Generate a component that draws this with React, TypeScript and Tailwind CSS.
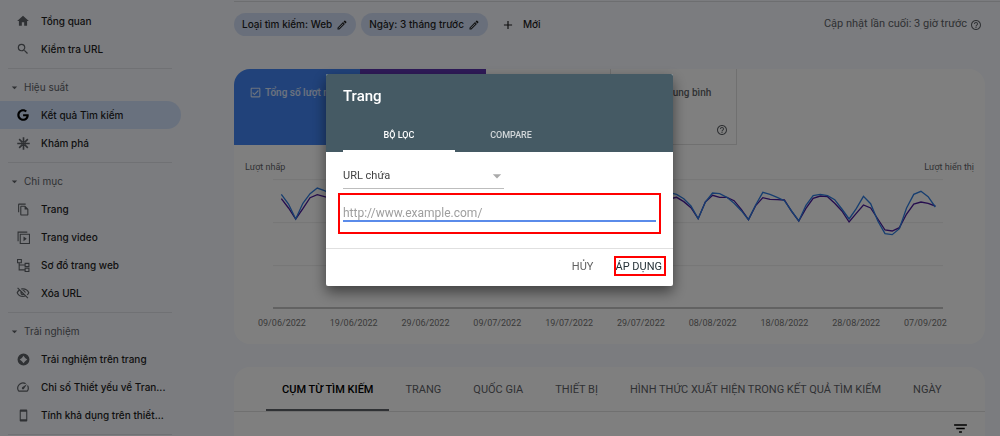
import React, { useState } from "react";
import {
  MdAdd,
  MdArrowDropDown,
  MdFilterList,
  MdHelpOutline,
  MdHome,
  MdOutlineCheckBox,
  MdOutlineCheckBoxOutlineBlank,
  MdOutlineEdit,
  MdOutlineFileCopy,
  MdOutlineSmartphone,
  MdOutlineSpeed,
  MdOutlineVisibilityOff,
  MdSearch,
} from "react-icons/md";
import { FaGoogle } from "react-icons/fa";

function DiscoverIcon() {
  return (
    <svg viewBox="0 0 24 24" className="size-[13px]" stroke="currentColor" strokeWidth="3" aria-hidden="true">
      <path d="M12 0.5v9M12 14.5v9M0.5 12h9M14.5 12h9M4 4l6 6M14 14l6 6M20 4l-6 6M10 14l-6 6" />
      <circle cx="12" cy="12" r="3" fill="currentColor" stroke="none" />
    </svg>
  );
}

function VideoPagesIcon() {
  return (
    <svg viewBox="0 0 24 24" className="size-[13px]" fill="none" stroke="currentColor" strokeWidth="2" aria-hidden="true">
      <path d="M2 19V2h17" />
      <path d="M6 6h17v17H6z" />
      <path d="M12 10v9l6-4.5z" fill="currentColor" stroke="none" />
    </svg>
  );
}

function SitemapIcon() {
  return (
    <svg viewBox="0 0 24 24" className="size-[13px]" fill="none" stroke="currentColor" strokeWidth="2" aria-hidden="true">
      <path d="M1 1h7v6H1zM15 8h7v6h-7zM15 17h7v6h-7z" />
      <path d="M4 7v13h11M4 11h11" />
    </svg>
  );
}

function ExperienceIcon() {
  return (
    <svg viewBox="0 0 24 24" className="size-[13px]" fill="currentColor" aria-hidden="true">
      <path
        fillRule="evenodd"
        d="M12 1a11 11 0 1 0 0 22 11 11 0 0 0 0-22zM9 9l3-4 3 4 4 3-4 3-3 4-3-4-4-3z"
      />
    </svg>
  );
}

const navSections = [
  {
    title: "",
    items: [
      { label: "Tổng quan", icon: <MdHome size={14} /> },
      { label: "Kiểm tra URL", icon: <MdSearch size={14} /> },
    ],
  },
  {
    title: "Hiệu suất",
    items: [
      { label: "Kết quả Tìm kiếm", icon: <FaGoogle size={12} />, active: true },
      { label: "Khám phá", icon: <DiscoverIcon /> },
    ],
  },
  {
    title: "Chỉ mục",
    items: [
      { label: "Trang", icon: <MdOutlineFileCopy size={13} /> },
      { label: "Trang video", icon: <VideoPagesIcon /> },
      { label: "Sơ đồ trang web", icon: <SitemapIcon /> },
      { label: "Xóa URL", icon: <MdOutlineVisibilityOff size={14} /> },
    ],
  },
  {
    title: "Trải nghiệm",
    items: [
      { label: "Trải nghiệm trên trang", icon: <ExperienceIcon /> },
      { label: "Chỉ số Thiết yếu về Tran...", icon: <MdOutlineSpeed size={14} /> },
      { label: "Tính khả dụng trên thiết...", icon: <MdOutlineSmartphone size={13} /> },
    ],
  },
  { title: "", items: [] },
];

const metrics = [
  { label: "Tổng số lượt nhấp", style: "bg-[#4285f4] text-white/80", checked: true },
  { label: "Tổng số lượt hiển thị", style: "bg-[#5e35b1] text-white/80", checked: true },
  { label: "CTR trung bình", style: "border-r border-b border-[#e0e0e0] text-[#5f6368]", checked: false },
  { label: "Vị trí trung bình", style: "border-r border-b border-[#e0e0e0] text-[#5f6368]", checked: false },
];

const dates = [
  "09/06/2022",
  "19/06/2022",
  "29/06/2022",
  "09/07/2022",
  "19/07/2022",
  "29/07/2022",
  "08/08/2022",
  "18/08/2022",
  "28/08/2022",
  "07/09/202",
];

const tabs = ["CỤM TỪ TÌM KIẾM", "TRANG", "QUỐC GIA", "THIẾT BỊ", "HÌNH THỨC XUẤT HIỆN TRONG KẾT QUẢ TÌM KIẾM", "NGÀY"];

// one week, repeated through the middle of the series
const weekClicks = [133, 162, 207, 160, 131, 114, 122];
const weekImpressions = [146, 174, 207, 176, 143, 134, 140];

const clicks = [
  ...weekClicks, ...weekClicks, ...weekClicks, ...weekClicks, ...weekClicks, ...weekClicks, ...weekClicks,
  133, 162, 207, 156, 129, 128,
  133, 146, 168, 206, 156, 129, 131, 142, 160, 182, 209, 165, 127, 133, 142, 152, 183, 213, 166,
  137, 133, 137, 149, 177, 207, 176, 139, 161, 213, 251, 254, 236, 174, 133, 124, 140, 171,
];
const impressions = [
  ...weekImpressions, ...weekImpressions, ...weekImpressions, ...weekImpressions, ...weekImpressions,
  ...weekImpressions, ...weekImpressions,
  146, 174, 207, 156, 138, 147,
  142, 155, 173, 206, 156, 136, 142, 142, 152, 178, 209, 167, 143, 148, 149, 150, 184, 213, 175,
  145, 138, 140, 160, 183, 216, 190, 165, 174, 207, 240, 243, 233, 192, 162, 156, 160, 168,
];

function toPoints(values: number[]) {
  return values.map((v, i) => `${25 + i * 21.56},${v}`).join(" ");
}

function Sidebar() {
  return (
    <nav className="w-[234px] shrink-0 pt-[7px] font-['Inter','Noto_Sans',sans-serif] text-[10px]">
      {navSections.map((section, idx) => (
        <div key={idx}>
          {idx > 0 && <div className="mt-[5px] mr-[62px] mb-1 ml-2 h-px bg-[#e0e2e8]" />}
          {section.title && (
            <div className="flex h-7 items-center gap-[3px] pl-2 text-[#5f6368]">
              <MdArrowDropDown size={13} />
              <span>{section.title}</span>
            </div>
          )}
          {section.items.map((item) => (
            <a
              key={item.label}
              href="#"
              className={`mr-[53px] flex h-7 items-center rounded-r-full pl-4 font-medium text-[#1f1f1f] ${
                item.active ? "bg-[#d3e3fd]" : ""
              }`}
            >
              <span className={`flex w-[25px] pr-[11px] ${item.active ? "text-black" : "text-[#5f6368]"}`}>
                <span className="flex w-[14px] shrink-0 justify-center">{item.icon}</span>
              </span>
              <span className="whitespace-nowrap">{item.label}</span>
            </a>
          ))}
        </div>
      ))}
    </nav>
  );
}

function FilterBar() {
  return (
    <div className="flex items-center justify-between border-t border-[#dadce0] pt-[11px] pr-[18px]">
      <div className="flex items-center gap-[5px] font-['Inter','Noto_Sans',sans-serif] text-[10px] font-medium text-[#1f1f1f]">
        <button className="flex h-[23px] items-center gap-1 rounded-full bg-[#d3dff6] px-2">
          Loại tìm kiếm: Web <MdOutlineEdit size={12} />
        </button>
        <button className="flex h-[23px] items-center gap-1 rounded-full bg-[#d3dff6] px-2">
          Ngày: 3 tháng trước <MdOutlineEdit size={12} />
        </button>
        <button className="flex h-[23px] items-center gap-2 pl-2">
          <MdAdd size={14} /> Mới
        </button>
      </div>
      <div className="flex items-center gap-[3px] text-[11px] text-[#5f6368]">
        Cập nhật lần cuối: 3 giờ trước <MdHelpOutline size={12} />
      </div>
    </div>
  );
}

function PerformanceCard() {
  return (
    <section className="mt-[33px] overflow-hidden rounded-2xl bg-white">
      <div className="grid h-[76px] w-[67%] grid-cols-4">
        {metrics.map((metric) => (
          <div
            key={metric.label}
            className={`flex flex-col justify-between pt-4 pr-2 pb-2 pl-[15px] text-[10px] font-medium ${metric.style}`}
          >
            <div className="flex items-center gap-[3px] whitespace-nowrap">
              {metric.checked ? <MdOutlineCheckBox size={13} /> : <MdOutlineCheckBoxOutlineBlank size={13} />}
              {metric.label}
            </div>
            <MdHelpOutline size={12} className="self-end" />
          </div>
        ))}
      </div>
      <div className="flex justify-between px-[11px] pt-4 text-[9px] leading-3 text-[#5f6368]">
        <span>Lượt nhấp</span>
        <span>Lượt hiển thị</span>
      </div>
      <svg
        viewBox="0 87 2010 390"
        preserveAspectRatio="none"
        className="mt-[6px] ml-[39px] block h-[130px] w-[calc(100%-81px)]"
      >
        <path d="M0 89h2010M0 218h2010M0 347h2010" stroke="#ececec" strokeWidth="3" />
        <path d="M0 474h2010" stroke="#c4c4c4" strokeWidth="6" />
        <polyline points={toPoints(impressions)} fill="none" stroke="#4a1a9c" strokeWidth="4" />
        <polyline points={toPoints(clicks)} fill="none" stroke="#2f7de1" strokeWidth="4" />
      </svg>
      <div className="flex justify-between pt-2 pr-[38px] pb-[15px] pl-6 text-[9px] leading-3 text-[#757575]">
        {dates.map((date) => (
          <span key={date}>{date}</span>
        ))}
      </div>
    </section>
  );
}

function QueriesCard() {
  return (
    <section className="mt-[23px] rounded-t-2xl bg-white">
      <div className="flex h-[45px] border-b border-[#e0e0e0] pl-8 text-[11px] text-[#5f6368]">
        {tabs.map((tab, idx) => (
          <button
            key={tab}
            className={`border-b-2 px-4 pt-1 whitespace-nowrap ${
              idx === 0 ? "border-[#5f6368] font-medium text-black" : "border-transparent"
            }`}
          >
            {tab}
          </button>
        ))}
      </div>
      <div className="flex justify-end py-2 pr-4">
        <button aria-label="Lọc">
          <MdFilterList size={17} />
        </button>
      </div>
    </section>
  );
}

function PageFilterDialog() {
  const [url, setUrl] = useState("");

  return (
    <div
      role="dialog"
      aria-labelledby="dialog-title"
      className="w-[347px] rounded-xs bg-white shadow-[0_6px_14px_rgba(0,0,0,0.5)]"
    >
      <div className="flex h-[78px] flex-col justify-between rounded-t-xs bg-[#455a64] px-[17px] pt-3 text-white">
        <h2 id="dialog-title" className="text-[15px] leading-5 font-medium">Trang</h2>
        <div className="flex text-[9px] font-medium">
          <button className="h-[34px] w-28 border-b-2 border-white pt-1">BỘ LỌC</button>
          <button className="h-[34px] w-28 border-b-2 border-transparent pt-1 text-white/75">COMPARE</button>
        </div>
      </div>
      <div className="px-[17px] pt-3">
        <div className="relative w-[161px]">
          <select
            aria-label="Kiểu bộ lọc"
            className="block h-[25px] w-full appearance-none border-b border-[#bdbdbd] bg-transparent text-[11px] text-[#424242] outline-none"
          >
            <option>URL chứa</option>
          </select>
          <MdArrowDropDown size={20} className="pointer-events-none absolute top-[2px] -right-[3px] text-[#aaaaaa]" />
        </div>
        <div className="relative mt-4">
          <input
            type="text"
            aria-label="URL"
            value={url}
            onChange={(e) => setUrl(e.target.value)}
            placeholder="http://www.example.com/"
            className="block h-[17px] w-full border-b-2 border-[#5a8bea] text-[12px] leading-4 outline-none placeholder:text-[#9e9e9e]"
          />
          <div className="pointer-events-none absolute -inset-x-[5px] -top-3 -bottom-3 border-2 border-[#ff0000]" />
        </div>
      </div>
      <div className="mt-[26px] flex items-center justify-end gap-[22px] border-t border-[#e0e0e0] pt-[7px] pr-[11px] pb-[10px] text-[11px]">
        <button className="h-5 pt-[3px] text-[#616161]">HỦY</button>
        <button className="relative h-5 pt-[3px] text-[#263238]">
          ÁP DỤNG
          <span className="pointer-events-none absolute inset-y-0 -right-1 -left-px border-2 border-[#ff0000]" />
        </button>
      </div>
    </div>
  );
}

export default function App() {
  return (
    <div className="h-screen overflow-hidden bg-[#f6f8fe] font-['Roboto','Noto_Sans',sans-serif]">
      <div className="flex">
        <Sidebar />
        <main className="min-w-0 flex-1 pt-px">
          <FilterBar />
          <div className="pr-[15px]">
            <PerformanceCard />
            <QueriesCard />
          </div>
        </main>
      </div>
      <div className="fixed inset-0 flex items-start justify-center bg-black/50 pt-[74px] pr-px">
        <PageFilterDialog />
      </div>
    </div>
  );
}
